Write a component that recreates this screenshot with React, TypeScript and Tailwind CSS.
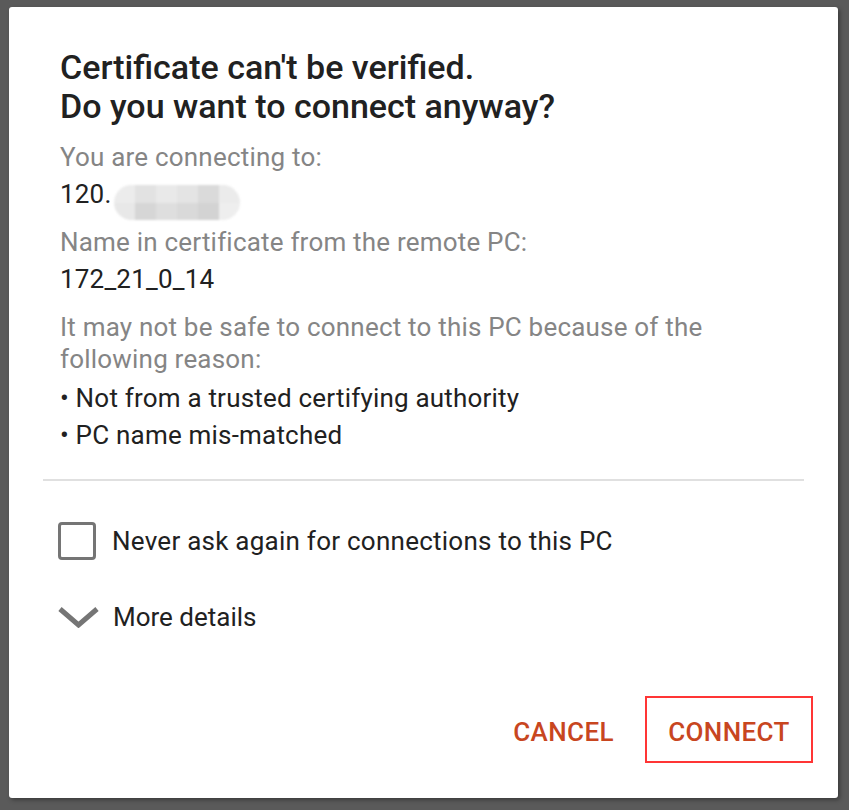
import React from 'react';

const mosaic = [
  ['#ececec', '#e2e2e2', '#e9e9e9', '#e4e4e4', '#dadada', '#ebebeb'],
  ['#e8e8e8', '#d6d6d6', '#dedede', '#d9d9d9', '#d3d3d3', '#eeeeee'],
];

const BlurredAddress: React.FC = () => (
  <span className="ml-[2px] mt-[7px] inline-flex h-[35px] w-[126px] flex-col overflow-hidden rounded-full blur-[1px]">
    {mosaic.map((row, i) => (
      <span key={i} className="flex h-[17.5px]">
        {row.map((c, j) => (
          <span key={j} className="h-full flex-1" style={{ backgroundColor: c }} />
        ))}
      </span>
    ))}
  </span>
);

const App: React.FC = () => {
  return (
    <div className="flex h-[810px] w-[849px] bg-[#5a5a5a] pb-[12px] pl-[9px] pr-[11px] pt-[7px] font-['Roboto',sans-serif]">
      <div className="flex flex-1 flex-col rounded-[3px] bg-white shadow-[2px_2px_4px_rgba(0,0,0,0.35)]">
        <div className="px-[51px] pt-[41px]">
          <h1 className="text-[34px] font-medium leading-[39px] text-[#212121]">
            Certificate can't be verified.
            <br />
            Do you want to connect anyway?
          </h1>

          <div className="mt-[15px] text-[26px] leading-[32px] tracking-[0.2px]">
            <p className="text-[#858585]">You are connecting to:</p>
            <p className="mt-[5px] flex h-[32px] items-start text-[#212121]">
              120.
              <BlurredAddress />
            </p>

            <p className="mt-[16px] text-[#858585]">Name in certificate from the remote PC:</p>
            <p className="mt-[5px] text-[#212121]">172_21_0_14</p>

            <p className="mt-[16px] text-[#858585]">
              It may not be safe to connect to this PC because of the following reason:
            </p>
            <p className="mt-[7px] text-[#212121]">• Not from a trusted certifying authority</p>
            <p className="mt-[5px] text-[#212121]">• PC name mis-matched</p>
          </div>
        </div>

        <div className="mx-[34px] mt-[28px] h-[2px] bg-[#e0e0e0]" />

        <div className="px-[49px]">
          <label className="mt-[41px] flex items-center gap-[16px]">
            <span className="h-[38px] w-[38px] rounded-[4px] border-[3px] border-[#757575]" />
            <span className="text-[26px] leading-[32px] tracking-[0.25px] text-[#212121]">
              Never ask again for connections to this PC
            </span>
          </label>

          <div className="mt-[41px] flex items-center gap-[14px]">
            <svg width="41" height="22" viewBox="0 0 41 22" className="shrink-0">
              <polyline points="2,3 20.5,19 39,3" fill="none" stroke="#757575" strokeWidth="5" />
            </svg>
            <span className="text-[26px] leading-[32px] text-[#212121]">More details</span>
          </div>
        </div>

        <div className="mt-auto flex items-center justify-end gap-[31px] pb-[35px] pr-[25px]">
          <button className="pt-[5px] text-[26px] font-medium uppercase tracking-[0.4px] text-[#c8461f]">
            Cancel
          </button>
          <button className="flex h-[67px] w-[168px] items-center justify-center border-2 border-[#ff3535] pt-[5px] text-[26px] font-medium uppercase tracking-[0.4px] text-[#c8461f]">
            Connect
          </button>
        </div>
      </div>
    </div>
  );
};

export default App;
